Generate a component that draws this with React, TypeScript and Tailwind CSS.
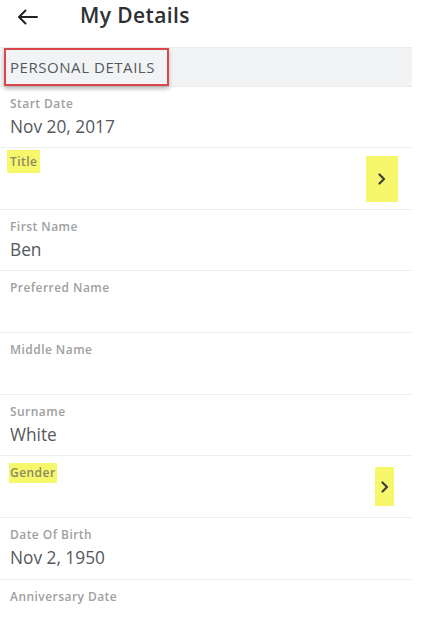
import React from "react";

type Row = { label: string; value?: string; h: string; chevron?: "title" | "gender" };

const rows: Row[] = [
  { label: "Start Date", value: "Nov 20, 2017", h: "h-[61px]" },
  { label: "Title", h: "h-[62px]", chevron: "title" },
  { label: "First Name", value: "Ben", h: "h-[61px]" },
  { label: "Preferred Name", h: "h-[62px]" },
  { label: "Middle Name", h: "h-[62px]" },
  { label: "Surname", value: "White", h: "h-[61px]" },
  { label: "Gender", h: "h-[62px]", chevron: "gender" },
  { label: "Date Of Birth", value: "Nov 2, 1950", h: "h-[62px]" },
  { label: "Anniversary Date", h: "h-[62px]" },
];

function Chevron() {
  return (
    <svg width="8" height="12" viewBox="0 0 8 12" fill="none">
      <path d="M1.5 1.5 L6 6 L1.5 10.5" stroke="#3f3f3f" strokeWidth="2.2" strokeLinecap="round" strokeLinejoin="round" />
    </svg>
  );
}

export default function App() {
  return (
    <div className="w-[432px] h-[619px] bg-white overflow-hidden" style={{ fontFamily: '"Open Sans", "Noto Sans", sans-serif' }}>
      <div className="w-[412px]">
        <div className="h-[47px] flex items-center">
          <div className="w-[80px] flex pl-[17px] -mt-[14px]">
            <svg width="21" height="16" viewBox="0 0 21 16" fill="none">
              <path d="M20 8 H2 M8.5 1.5 L2 8 L8.5 14.5" stroke="#222" strokeWidth="2" strokeLinecap="round" strokeLinejoin="round" />
            </svg>
          </div>
          <div className="text-[21px] font-semibold text-[#2f3033] -mt-[15px] tracking-[0.4px]">My Details</div>
        </div>
        <div className="h-[40px] bg-[#f2f3f5] border-y border-[#ebebeb] flex items-stretch">
          <div className="ml-[4px] w-[165px] border-2 border-[#d9474a] shadow-[0_3px_4px_rgba(0,0,0,0.25)] flex items-center pl-[4px]">
            <span className="text-[15px] text-[#55585c] tracking-[0.55px]">PERSONAL DETAILS</span>
          </div>
        </div>
        {rows.map((r) => (
          <div key={r.label} className={`${r.h} border-b border-[#efefef] flex`}>
            {r.chevron === "title" ? (
              <div className="flex-1">
                <div className="mt-[2px] ml-[7px] h-[23px] w-fit px-[3px] bg-[#f6f76a] flex items-center text-[12px] font-semibold text-[#8a8a62] tracking-[0.45px]">
                  {r.label}
                </div>
              </div>
            ) : r.chevron === "gender" ? (
              <div className="flex-1">
                <div className="mt-[7px] ml-[9px] h-[20px] w-fit px-[1px] bg-[#f6f76a] flex items-center text-[12px] font-semibold text-[#8a8a62] tracking-[0.45px]">
                  {r.label}
                </div>
              </div>
            ) : (
              <div className="flex-1 pl-[10px] pt-[8px]">
                <div className="text-[12px] font-semibold text-[#a0a0a0] tracking-[0.45px]">{r.label}</div>
                {r.value && <div className="text-[17.3px] text-[#55585c] mt-[1px] leading-[26px]">{r.value}</div>}
              </div>
            )}
            {r.chevron === "title" && (
              <div className="mr-[14px] mt-[8px] w-[32px] h-[46px] bg-[#f6f76a] flex items-center justify-center">
                <Chevron />
              </div>
            )}
            {r.chevron === "gender" && (
              <div className="mr-[18px] mt-[11px] w-[19px] h-[39px] bg-[#f6f76a] flex items-center justify-center">
                <Chevron />
              </div>
            )}
          </div>
        ))}
      </div>
    </div>
  );
}
